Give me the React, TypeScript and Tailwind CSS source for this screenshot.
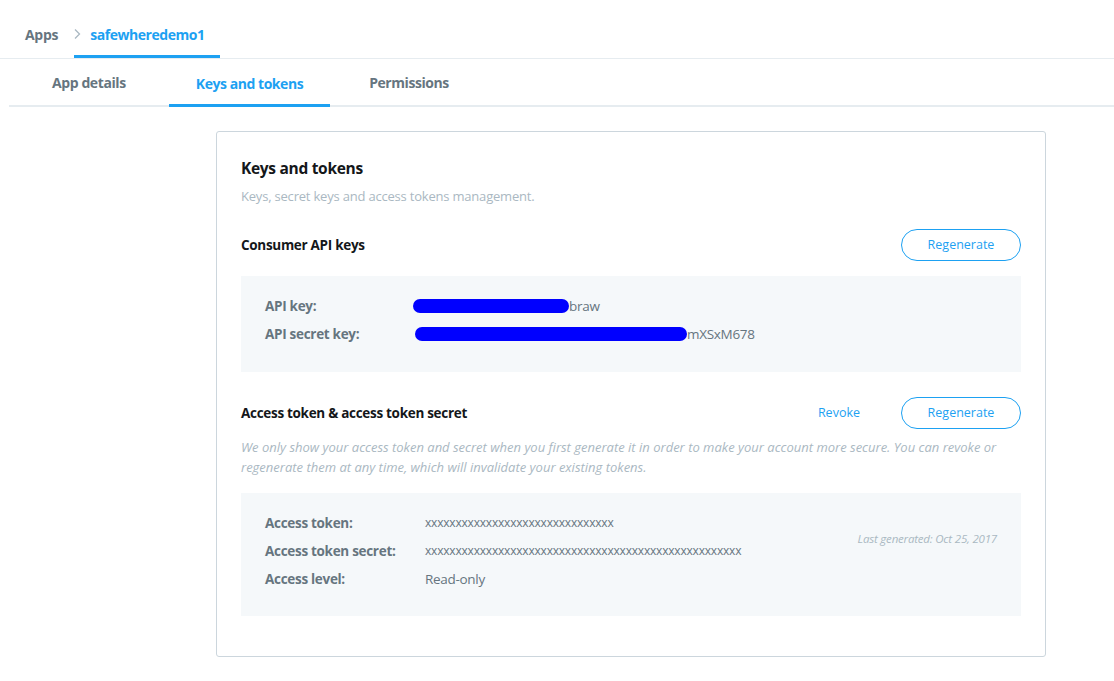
const font = "font-['Open_Sans',sans-serif]";

function Pill({ children }: { children: React.ReactNode }) {
  return (
    <button className="h-[32px] w-[120px] rounded-full border border-[#1da1f2] text-[12.5px] text-[#1da1f2] bg-white">
      {children}
    </button>
  );
}

function Redact({ w }: { w: number }) {
  return (
    <span
      className="inline-block h-[14px] rounded-full bg-[#0000ff] align-middle"
      style={{ width: w }}
    />
  );
}

export default function App() {
  return (
    <div className={`${font} min-h-[681px] w-[1114px] bg-white text-[#66757f]`}>
      {/* breadcrumb */}
      <div className="flex h-[59px] items-end border-b border-[#e6ecf0]">
        <div className="flex h-[58px] items-center pl-[25px] pr-[16px] pt-[10px] text-[14px] font-bold text-[#66757f] tracking-[-0.3px]">
          Apps
        </div>
        <div className="flex h-[58px] items-center border-b-[3px] border-[#1da1f2] pr-[15px] pt-[13px]">
          <svg width="10" height="12" viewBox="0 0 10 12" className="ml-[-1px] mr-[7px]">
            <path d="M2 1.5 L6.5 6 L2 10.5" fill="none" stroke="#aab8c2" strokeWidth="1.3" />
          </svg>
          <span className="text-[14px] font-bold text-[#1da1f2] tracking-[-0.45px]">safewheredemo1</span>
        </div>
      </div>

      {/* tabs */}
      <div className="ml-[9px] flex h-[48px] gap-[16px] border-b-[2px] border-[#e6ecf0] pl-[16px]">
        <div className="flex items-center px-[27px] text-[14px] font-bold tracking-[-0.4px]">App details</div>
        <div className="mb-[-2px] flex items-center border-b-[3px] border-[#1da1f2] px-[27px] pt-[3px] text-[14px] font-bold text-[#1da1f2] tracking-[-0.45px]">
          Keys and tokens
        </div>
        <div className="ml-[-4px] flex items-center px-[27px] text-[14px] font-bold tracking-[-0.45px]">Permissions</div>
      </div>

      {/* card */}
      <div className="ml-[216px] mt-[24px] w-[830px] rounded-[3px] border border-[#ccd6dd] px-[24px] pb-[40px] pt-[24px]">
        <h2 className="text-[15.5px] font-bold leading-[24px] text-[#14171a] tracking-[-0.3px]">Keys and tokens</h2>
        <p className="mt-[6px] text-[13px] leading-[20px] text-[#aab8c2] tracking-[-0.2px]">
          Keys, secret keys and access tokens management.
        </p>

        <div className="mt-[23px] flex items-center justify-between">
          <h3 className="text-[13.5px] font-bold text-[#14171a] tracking-[-0.3px]">Consumer API keys</h3>
          <Pill>Regenerate</Pill>
        </div>

        <div className="mt-[15px] h-[96px] bg-[#f5f8fa] px-[24px] pt-[16px] text-[13.5px]">
          <div className="flex h-[28px] items-center">
            <span className="w-[148px] font-bold tracking-[-0.3px]">API key:</span>
            <span className="flex items-center tracking-[-0.3px]">
              <Redact w={156} />
              braw
            </span>
          </div>
          <div className="flex h-[28px] items-center">
            <span className="w-[150px] font-bold tracking-[-0.3px]">API secret key:</span>
            <span className="flex items-center tracking-[-0.3px]">
              <Redact w={272} />
              mXSxM678
            </span>
          </div>
        </div>

        <div className="mt-[25px] flex items-center justify-between">
          <h3 className="text-[13.5px] font-bold text-[#14171a] tracking-[-0.3px]">Access token &amp; access token secret</h3>
          <div className="flex items-center gap-[41px]">
            <span className="text-[12.5px] text-[#1da1f2]">Revoke</span>
            <Pill>Regenerate</Pill>
          </div>
        </div>

        <p className="mt-[8px] whitespace-nowrap text-[13px] italic leading-[20px] text-[#aab8c2]">
          We only show your access token and secret when you first generate it in order to make your account more secure. You can revoke or
          <br />
          regenerate them at any time, which will invalidate your existing tokens.
        </p>

        <div className="mt-[16px] flex h-[123px] justify-between bg-[#f5f8fa] px-[24px] pt-[16px] text-[13.5px]">
          <div>
            <div className="flex h-[28px] items-center">
              <span className="w-[160px] font-bold tracking-[-0.3px]">Access token:</span>
              <span className="text-[12px] tracking-[-0.2px]">xxxxxxxxxxxxxxxxxxxxxxxxxxxxxxx</span>
            </div>
            <div className="flex h-[28px] items-center">
              <span className="w-[160px] font-bold tracking-[-0.3px]">Access token secret:</span>
              <span className="text-[12px] tracking-[-0.2px]">xxxxxxxxxxxxxxxxxxxxxxxxxxxxxxxxxxxxxxxxxxxxxxxxxxxx</span>
            </div>
            <div className="flex h-[28px] items-center">
              <span className="w-[160px] font-bold tracking-[-0.3px]">Access level:</span>
              <span className="tracking-[-0.3px]">Read-only</span>
            </div>
          </div>
          <div className="pt-[21px] text-[11.5px] italic text-[#aab8c2] tracking-[-0.2px]">Last generated: Oct 25, 2017</div>
        </div>
      </div>
    </div>
  );
}
